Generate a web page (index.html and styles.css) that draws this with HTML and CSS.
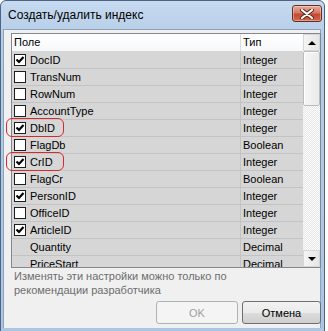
FILE: index.html
```html
<!DOCTYPE html>
<html lang="ru">
<head>
    <meta charset="UTF-8">
    <title>Создать/удалить индекс</title>
    <link rel="stylesheet" href="styles.css">
</head>
<body>
    <div class="window">
        <div class="titlebar">
            <span class="title">Создать/удалить индекс</span>
            <div class="close">
                <svg width="14" height="10" viewBox="0 0 14 10">
                    <path d="M2 1 L12 9 M12 1 L2 9" stroke="#5a2218" stroke-width="4" stroke-linecap="round"/>
                    <path d="M2 1 L12 9 M12 1 L2 9" stroke="#fff" stroke-width="2.2" stroke-linecap="round"/>
                </svg>
            </div>
        </div>
        <div class="client">
            <div class="grid">
                <div class="grid-body">
                    <div class="header">
                        <div class="cell name">Поле</div>
                        <div class="cell type">Тип</div>
                    </div>
                    <div class="row"><div class="cell name"><span class="check on"></span>DocID</div><div class="cell type">Integer</div></div>
                    <div class="row"><div class="cell name"><span class="check"></span>TransNum</div><div class="cell type">Integer</div></div>
                    <div class="row"><div class="cell name"><span class="check"></span>RowNum</div><div class="cell type">Integer</div></div>
                    <div class="row"><div class="cell name"><span class="check"></span>AccountType</div><div class="cell type">Integer</div></div>
                    <div class="row"><div class="cell name"><span class="check on"></span>DbID</div><div class="cell type">Integer</div></div>
                    <div class="row"><div class="cell name"><span class="check"></span>FlagDb</div><div class="cell type">Boolean</div></div>
                    <div class="row"><div class="cell name"><span class="check on"></span>CrID</div><div class="cell type">Integer</div></div>
                    <div class="row"><div class="cell name"><span class="check"></span>FlagCr</div><div class="cell type">Boolean</div></div>
                    <div class="row"><div class="cell name"><span class="check on"></span>PersonID</div><div class="cell type">Integer</div></div>
                    <div class="row"><div class="cell name"><span class="check"></span>OfficeID</div><div class="cell type">Integer</div></div>
                    <div class="row"><div class="cell name"><span class="check on"></span>ArticleID</div><div class="cell type">Integer</div></div>
                    <div class="row"><div class="cell name"><span class="nocheck"></span>Quantity</div><div class="cell type">Decimal</div></div>
                    <div class="row"><div class="cell name"><span class="nocheck"></span>PriceStart</div><div class="cell type">Decimal</div></div>
                </div>
                <div class="scrollbar">
                    <div class="sb-btn"><span class="arrow up"></span></div>
                    <div class="sb-track">
                        <div class="sb-thumb"></div>
                    </div>
                    <div class="sb-btn"><span class="arrow down"></span></div>
                </div>
            </div>
            <p class="hint">Изменять эти настройки можно только по<br>рекомендации разработчика</p>
            <div class="buttons">
                <button class="btn ok" disabled>OK</button>
                <button class="btn cancel">Отмена</button>
            </div>
            <div class="mark mark-db"></div>
            <div class="mark mark-cr"></div>
        </div>
    </div>
</body>
</html>
```

FILE: styles.css
```css
body {
    margin: 0;
    width: 328px;
    height: 331px;
    overflow: hidden;
    background: #ffffff;
    font-family: "Liberation Sans", Arial, sans-serif;
    font-size: 11px;
    color: #000;
}
.window {
    width: 323px;
    height: 333px;
    border: 1px solid #4d6582;
    border-radius: 6px 6px 0 0;
    background: linear-gradient(#c6daf0, #b4cce6 40px, #aac6e4);
    display: flex;
    flex-direction: column;
}
.titlebar {
    height: 28px;
    display: flex;
    align-items: flex-start;
    justify-content: space-between;
    padding: 0 2px 0 7px;
}
.title {
    font-size: 12px;
    margin-top: 7px;
    color: #000;
}
.close {
    margin-top: 4px;
    width: 28px;
    height: 15px;
    border: 1px solid #6b2d22;
    border-radius: 3px;
    background: linear-gradient(#e9a99a, #d47a66 45%, #c44a31 55%, #d1664c);
    display: flex;
    align-items: center;
    justify-content: center;
    box-shadow: inset 0 0 0 1px rgba(255, 255, 255, 0.35);
}
.client {
    position: relative;
    margin: 0 3px 0 2px;
    height: 299px;
    background: #f0f0f0;
    border: 1px solid #8da3bc;
    border-bottom: none;
    padding: 3px 0 0 7px;
    box-sizing: border-box;
}
.grid {
    width: 310px;
    height: 235px;
    border: 1px solid #828790;
    box-sizing: border-box;
    display: flex;
    background: #fff;
    overflow: hidden;
}
.grid-body {
    flex: 1;
    overflow: hidden;
}
.header, .row {
    display: flex;
}
.header {
    height: 17px;
    border-bottom: 1px solid #d5d5d5;
    background: linear-gradient(#ffffff, #f7f8fa);
}
.header .cell {
    line-height: 17px;
}
.header .name {
    padding-left: 2px;
}
.row {
    height: 16px;
    border-bottom: 1px solid #c3c3c3;
    background: #d6d6d6;
}
.cell {
    box-sizing: border-box;
    line-height: 16px;
    white-space: nowrap;
}
.name {
    width: 229px;
    border-right: 1px solid #c3c3c3;
    padding-left: 2px;
    display: flex;
    align-items: center;
}
.header .name {
    border-right-color: #dcdcdc;
}
.type {
    flex: 1;
    padding-left: 2px;
}
.check, .nocheck {
    width: 12px;
    height: 12px;
    margin-right: 4px;
    flex: none;
    box-sizing: border-box;
}
.check {
    border: 1px solid #1e1e1e;
    background: #fff;
}
.check.on {
    background: #fff url("data:image/svg+xml;utf8,<svg xmlns='http://www.w3.org/2000/svg' width='10' height='10'><path d='M1.5 4.5 L4 7 L8.5 2' fill='none' stroke='%23000' stroke-width='2.2'/></svg>") center no-repeat;
}
.scrollbar {
    width: 17px;
    display: flex;
    flex-direction: column;
    background: #f0f0f0;
}
.sb-btn {
    height: 17px;
    box-sizing: border-box;
    border: 1px solid #d6d6d6;
    background: linear-gradient(90deg, #f4f4f4, #e6e6e6);
    display: flex;
    align-items: center;
    justify-content: center;
}
.arrow {
    width: 0;
    height: 0;
    border-left: 4px solid transparent;
    border-right: 4px solid transparent;
}
.arrow.up {
    border-bottom: 4px solid #000;
}
.arrow.down {
    border-top: 4px solid #000;
}
.sb-track {
    flex: 1;
    background-color: #f5f5f5;
    background-image: repeating-conic-gradient(#e8e8e8 0 25%, #fbfbfb 0 50%);
    background-size: 2px 2px;
}
.sb-thumb {
    height: 55px;
    box-sizing: border-box;
    border: 1px solid #bcbcbc;
    border-radius: 2px;
    background: linear-gradient(90deg, #f6f6f6, #eaeaea);
    box-shadow: inset 1px 1px 0 #fff;
}
.hint {
    margin: 1px 0 0 3px;
    line-height: 14px;
    color: #6d6d6d;
}
.buttons {
    display: flex;
    justify-content: flex-end;
    gap: 4px;
    width: 310px;
    margin-top: 4px;
}
.btn {
    height: 23px;
    border-radius: 3px;
    font-family: "Liberation Sans", Arial, sans-serif;
    font-size: 11px;
    padding: 0;
}
.ok {
    width: 82px;
    border: 1px solid #adb2b5;
    background: #f4f4f4;
    color: #a0a0a0;
}
.cancel {
    width: 79px;
    border: 1px solid #707070;
    background: linear-gradient(#f2f2f2, #ebebeb 50%, #dddddd 50%, #cfcfcf);
    color: #000;
}
.mark {
    position: absolute;
    left: 2px;
    width: 56px;
    height: 17px;
    border: 1px solid #d42a2a;
    border-radius: 6px;
}
.mark-db {
    top: 88px;
}
.mark-cr {
    top: 122px;
}
```
